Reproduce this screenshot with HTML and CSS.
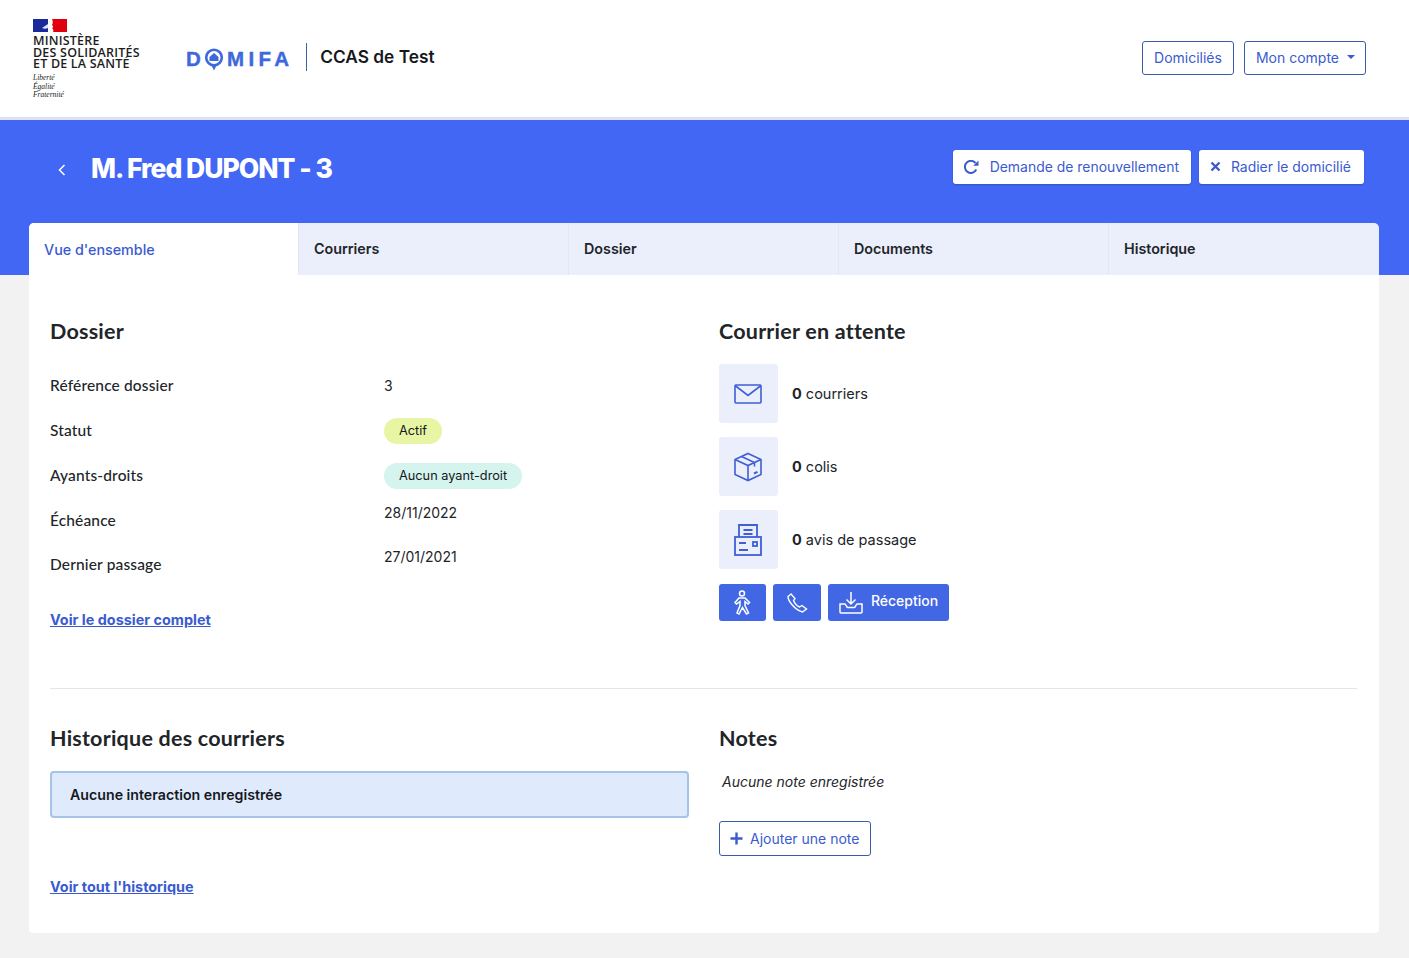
FILE: index.html
```html
<!DOCTYPE html>
<html lang="fr">
<head>
  <meta charset="UTF-8" />
  <title>Domifa</title>
  <link rel="stylesheet" href="styles.css">
</head>
<body>
  <header class="top-bar">
    <div class="brand">
      <div class="ministry">
        <svg class="flag" width="34" height="13" viewBox="0 0 34 13">
          <rect width="15" height="13" fill="#1b2a9b"/>
          <path d="M19 0h15v13H20c1-2 0-3-1-4 2-1 1-2 0-3 1-2 1-4 0-6z" fill="#e1000f"/>
          <path d="M9 9c2-1 4-3 6-4v4c-2 1-4 1-6 0z" fill="#dfe3f5"/>
        </svg>
        <div class="ministry-name">
          <div>MINISTÈRE</div>
          <div>DES SOLIDARITÉS</div>
          <div>ET DE LA SANTÉ</div>
        </div>
        <div class="motto">Liberté<br>Égalité<br>Fraternité</div>
      </div>
      <div class="domifa">
        <span>D</span>
        <svg width="20" height="23" viewBox="0 0 20 23">
          <circle cx="10" cy="9.500" r="7.800" fill="none" stroke="#3f68dc" stroke-width="2.600"/>
          <path d="M7.500 17.500h5L10 22.500z" fill="#3f68dc"/>
          <path d="M10 5l4.500 4v4h-9V9z" fill="#3f68dc"/>
        </svg>
        <span>MIFA</span>
      </div>
      <div class="structure">CCAS de Test</div>
    </div>
    <nav class="top-nav">
      <a class="btn-outline" href="#">Domiciliés</a>
      <a class="btn-outline btn-account" href="#">Mon compte <i class="caret"></i></a>
    </nav>
  </header>

  <section class="hero">
    <div class="hero-row">
      <div class="hero-title">
        <svg class="back" width="8" height="12" viewBox="0 0 8 12"><path d="M6.500 1L1.500 6l5 5" fill="none" stroke="#fff" stroke-width="1.500"/></svg>
        <h1>M. Fred DUPONT - 3</h1>
      </div>
      <div class="hero-actions">
        <a class="btn-white" href="#">
          <svg width="15" height="14" viewBox="0 0 15 14"><path d="M12.300 9.500A6 6 0 1 1 11.500 3" fill="none" stroke="#3a5bd0" stroke-width="2"/><path d="M14.500 0.500v5.300H9.200z" fill="#3a5bd0"/></svg>
          Demande de renouvellement
        </a>
        <a class="btn-white btn-radier" href="#">
          <svg width="11" height="11" viewBox="0 0 11 11"><path d="M1.500 1.500l8 8M9.500 1.500l-8 8" stroke="#3a5bd0" stroke-width="2.400"/></svg>
          Radier le domicilié
        </a>
      </div>
    </div>
    <div class="tabs">
      <a class="tab active" href="#">Vue d'ensemble</a>
      <a class="tab" href="#">Courriers</a>
      <a class="tab" href="#">Dossier</a>
      <a class="tab" href="#">Documents</a>
      <a class="tab" href="#">Historique</a>
    </div>
  </section>

  <main class="card">
    <div class="columns first">
      <section>
        <h2>Dossier</h2>
        <div class="info-row"><span class="label">Référence dossier</span><span>3</span></div>
        <div class="info-row"><span class="label">Statut</span><span><span class="pill pill-green">Actif</span></span></div>
        <div class="info-row"><span class="label">Ayants-droits</span><span><span class="pill pill-teal">Aucun ayant-droit</span></span></div>
        <div class="info-row"><span class="label">Échéance</span><span class="date date-low">28/11/2022</span></div>
        <div class="info-row"><span class="label label-last">Dernier passage</span><span class="date">27/01/2021</span></div>
        <a class="link link-dossier" href="#">Voir le dossier complet</a>
      </section>
      <section>
        <h2>Courrier en attente</h2>
        <div class="mail-row">
          <div class="mail-icon">
            <svg width="28" height="20" viewBox="0 0 28 20" fill="none" stroke="#3f5fd6" stroke-width="1.600"><rect x="1" y="1" width="26" height="18" rx="1"/><path d="M1 1.500l13 10 13-10"/></svg>
          </div>
          <div><b>0</b> courriers</div>
        </div>
        <div class="mail-row">
          <div class="mail-icon">
            <svg width="30" height="30" viewBox="0 0 30 30" fill="none" stroke="#3f5fd6" stroke-width="1.600"><path d="M15 1.500L28 7.500v15L15 28.500 2 22.500v-15z"/><path d="M2 7.500l13 6 13-6M15 13.500v15M8.500 4.500l13 6v4"/><path d="M21 21.500l3.500-1.600" stroke-width="2"/></svg>
          </div>
          <div><b>0</b> colis</div>
        </div>
        <div class="mail-row">
          <div class="mail-icon">
            <svg width="30" height="34" viewBox="0 0 30 34" fill="none" stroke="#3f5fd6" stroke-width="1.800"><path d="M6 14V2h18v12"/><path d="M10.500 7h9M10.500 11h9"/><rect x="2" y="14" width="26" height="18"/><path d="M6 20h7M6 27h9"/><rect x="20" y="19" width="4" height="4"/></svg>
          </div>
          <div><b>0</b> avis de passage</div>
        </div>
        <div class="mail-actions">
          <a class="btn-blue btn-square" href="#">
            <svg width="18" height="25" viewBox="0 0 18 25" fill="none" stroke="#fff" stroke-width="1.500"><circle cx="9" cy="3.500" r="2.500"/><path d="M6 8h6l4.500 4.500-1.500 1.500-3-2.500v4l3.500 7.500-2 1-4-6.500-3.500 6.500-2-1L7 15.500v-4L3.500 14 2 12.500z"/></svg>
          </a>
          <a class="btn-blue btn-phone" href="#">
            <svg width="21" height="20" viewBox="0 0 21 20" fill="none" stroke="#fff" stroke-width="1.400"><path d="M4 1L1 3.500c0 4 6 13 14.500 15.500l4-3-4.500-3.500-2.500 1.500C10 13 7.500 10 6.500 7.500L8 5.500z"/></svg>
          </a>
          <a class="btn-blue btn-reception" href="#">
            <svg width="24" height="23" viewBox="0 0 24 23" fill="none" stroke="#fff" stroke-width="1.500"><path d="M12 1v12M7.500 8.500L12 13l4.500-4.500"/><path d="M1 13h5c1 0 1 3.500 3 3.500h6c2 0 2-3.500 3-3.500h5v8a1 1 0 0 1-1 1H2a1 1 0 0 1-1-1z"/></svg>
            <span>Réception</span>
          </a>
        </div>
      </section>
    </div>
    <hr class="divider">
    <div class="columns">
      <section>
        <h2>Historique des courriers</h2>
        <div class="alert">Aucune interaction enregistrée</div>
        <a class="link link-history" href="#">Voir tout l'historique</a>
      </section>
      <section>
        <h2>Notes</h2>
        <p class="no-note">Aucune note enregistrée</p>
        <a class="btn-outline btn-note" href="#">
          <svg width="13" height="13" viewBox="0 0 13 13"><path d="M6.500 0.500v12M0.500 6.500h12" stroke="#3a5bd0" stroke-width="2.400"/></svg>
          Ajouter une note
        </a>
      </section>
    </div>
  </main>
</body>
</html>
```

FILE: styles.css
```css
* { box-sizing: border-box; }
body { margin: 0; background: #f2f2f2; color: #212529; font-family: Inter, "Liberation Sans", sans-serif; font-size: 14px; }
a { text-decoration: none; }

.top-bar { height: 120px; background: #fff; border-bottom: 3px solid #dfe3f0; display: flex; justify-content: space-between; align-items: flex-start; padding: 0 43px 0 33px; }
.brand { display: flex; align-items: flex-start; }
.ministry { width: 153px; padding-top: 19px; }
.flag { display: block; }
.ministry-name { font-family: "Open Sans", sans-serif; font-size: 12.500px; font-weight: 600; margin-top: 3px; color: #1d1d1d; letter-spacing: 0.2px; white-space: nowrap; }
.ministry-name div { height: 11.700px; line-height: 11.700px; }
.motto { font-family: "Liberation Serif", serif; font-style: italic; font-size: 7.500px; line-height: 8.500px; margin-top: 4px; color: #222; }
.domifa { display: flex; align-items: center; margin-top: 47px; color: #3f68dc; font-family: "Liberation Sans", sans-serif; font-weight: 700; font-size: 20.500px; letter-spacing: 4.300px; height: 23px; -webkit-text-stroke: 0.4px #3f68dc; }
.domifa svg { margin: 1px 3px 0 -1px; }
.structure { margin: 43px 0 0 13px; height: 28px; line-height: 28px; padding-left: 13px; border-left: 1px solid #3f5fa8; font-size: 17.300px; font-weight: 600; color: #16181d; }
.top-nav { display: flex; gap: 10px; margin-top: 41px; }

.btn-outline { display: inline-flex; align-items: center; height: 34px; padding: 0 11px 2px; background: #fff; border: 1px solid #3a5ca8; border-radius: 3px; color: #3a5bd0; font-size: 14px; }
.btn-account { padding-right: 10px; }
.caret { display: inline-block; margin-left: 8px; margin-top: -1px; border-top: 4.500px solid #3a5bd0; border-left: 4.500px solid transparent; border-right: 4.500px solid transparent; }

.hero { height: 155px; background: #4267f4; padding: 0 30px 0 29px; }
.hero-row { display: flex; justify-content: space-between; height: 103px; padding: 30px 15px 0 29px; }
.hero-title { display: flex; align-items: flex-start; }
.back { margin: 14px 25px 0 0; }
h1 { margin: 0; color: #fff; font-size: 26.500px; font-weight: 800; line-height: 36px; letter-spacing: -1px; }
.hero-actions { display: flex; gap: 8px; }
.btn-white { display: inline-flex; align-items: center; gap: 11px; height: 34px; padding: 0 12px 2px 11px; background: #fff; border-radius: 3px; color: #3a5bd0; font-size: 13.950px; box-shadow: 0 1px 2px rgba(0,0,0,0.2); }
.btn-radier { gap: 10px; padding-right: 13px; }
.btn-white svg { margin-top: 1px; }

.tabs { display: grid; grid-template-columns: 269px repeat(3, 270px) 1fr; height: 52px; background: #ebeffc; border-radius: 5px 5px 0 0; overflow: hidden; }
.tab { display: flex; align-items: center; padding: 0 0 2px 15px; color: #212529; font-weight: 600; font-size: 14.300px; border-left: 1px solid #e3e7f5; }
.tab.active { background: #fff; color: #3a5bd0; font-weight: 500; border-left: 0; padding: 0 0 0 15px; }

.card { margin: 0 30px 25px 29px; height: 658px; background: #fff; padding: 0 22px 0 21px; border-radius: 0 0 4px 4px; }
.columns { display: grid; grid-template-columns: 639px 1fr; gap: 30px; }
.columns.first { height: 413px; padding-top: 41px; }
h2 { margin: 0; font-family: Lato, sans-serif; font-size: 21.500px; font-weight: 700; line-height: 30px; color: #212529; letter-spacing: 0.22px; }

.info-row { display: grid; grid-template-columns: 334px 1fr; height: 45px; align-items: center; }
.info-row:first-of-type { margin-top: 17px; }
.label { font-family: Lato, sans-serif; font-size: 15.500px; font-weight: 500; letter-spacing: 0.15px; padding-bottom: 2px; }
.label-last { padding-bottom: 3px; }
.date { align-self: start; margin-top: 5px; }
.date-low { margin-top: 6px; }
.pill { display: inline-block; height: 26px; line-height: 26px; padding: 0 15px; border-radius: 13px; font-size: 12.750px; color: #16181d; }
.pill-green { background: #e8f5a5; }
.pill-teal { background: #d5f4ee; }
.link { display: inline-block; color: #3a5bd0; font-weight: 700; font-size: 14.400px; text-decoration: underline; }
.link-dossier { margin-top: 23px; }

.mail-row { display: flex; align-items: center; gap: 14px; height: 59px; margin-bottom: 14px; font-size: 14.500px; }
.mail-row:first-of-type { margin-top: 18px; }
.mail-icon { width: 59px; height: 59px; display: flex; align-items: center; justify-content: center; padding-right: 1px; background: #ebeffc; border-radius: 3px; }
.mail-actions { display: flex; gap: 7px; margin-top: 15px; }
.btn-blue { display: inline-flex; align-items: center; justify-content: center; height: 37px; background: #4267e4; border-radius: 3px; color: #fff; font-weight: 500; font-size: 14px; }
.btn-square { width: 47px; padding-right: 2px; }
.btn-phone { width: 48px; }
.btn-reception { width: 121px; gap: 8px; }
.btn-reception span { padding-bottom: 4px; }

.divider { margin: 0; border: 0; border-top: 1px solid #e3e5e8; }
.columns:last-child { padding-top: 34px; }
.alert { margin-top: 18px; height: 47px; line-height: 44px; padding-left: 18px; background: #dfeafc; border: 2px solid #a6c3e8; border-radius: 4px; font-weight: 600; color: #16181d; font-size: 14.200px; }
.link-history { margin-top: 60px; }
.no-note { margin: 19px 0 0 3px; font-style: italic; line-height: 20px; }
.btn-note { margin-top: 29px; height: 35px; gap: 7px; padding: 0 11px 0 10px; }
```
